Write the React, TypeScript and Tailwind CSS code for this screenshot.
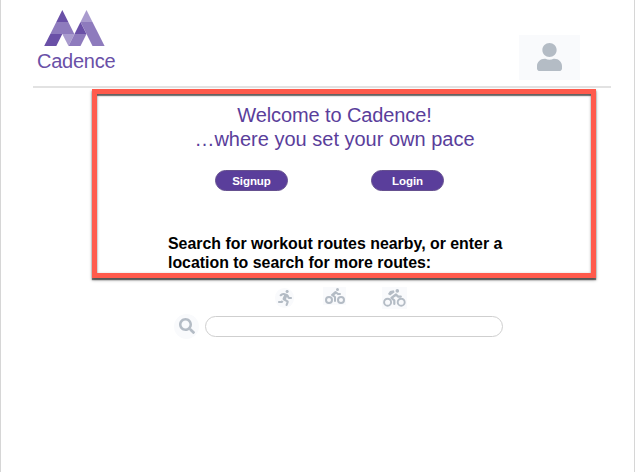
import React from "react";
import { FaUser, FaRunning, FaBiking, FaSearch } from "react-icons/fa";

function Logo() {
  return (
    <svg className="block ml-[11px]" width="61" height="36" viewBox="0 0 61 36">
      <path d="M18.3 0L24.3 12H12.3Z" fill="#6a50a7" />
      <path d="M12.3 12H24.3L30.3 24H6.3Z" fill="#8e7bbd" />
      <path d="M6.3 24H18.3L12.3 36H0.2Z" fill="#6a50a7" />
      <path d="M18.3 24H30.5L24.5 36Z" fill="#a99bce" />
      <path d="M30.5 24H42.5L36.5 36H24.5Z" fill="#8e7bbd" />
      <path d="M42.5 0L48.5 12H36.5Z" fill="#a99bce" />
      <path d="M36.5 12L42.5 24H30.5Z" fill="#6a50a7" />
      <path d="M36.5 12H48.5L60.6 36H48.5Z" fill="#8e7bbd" />
    </svg>
  );
}

function MountainBiker() {
  return (
    <svg className="block" width="23" height="18" viewBox="0 0 23 18">
      <g fill="none" stroke="#b4bcc5" strokeWidth="1.9">
        <circle cx="4.6" cy="13.2" r="3.5" />
        <circle cx="18.2" cy="13.2" r="3.5" />
        <path d="M11.3 15V11.4L8.4 9L13 5.5L15.2 7.6H17.8" strokeWidth="2.2" strokeLinecap="round" strokeLinejoin="round" />
      </g>
      <circle cx="14.3" cy="1.9" r="1.8" fill="#b4bcc5" />
      <path d="M7 2.1L10.7 1.2L11.6 3.3L7.1 6.6L4.9 4.9Z" fill="#b4bcc5" />
    </svg>
  );
}

function Button({ children }: { children: string }) {
  return (
    <button className="h-[21px] w-[73px] rounded-full border border-[#65508f] bg-[#5a3e9b] text-[11.5px] font-bold leading-[20px] tracking-[-0.05px] text-white">
      {children}
    </button>
  );
}

export default function App() {
  return (
    <div className="h-[472px] w-[635px] overflow-hidden border-x border-[#d6d6d6] bg-white font-['Liberation_Sans',Arial,sans-serif]">
      <header className="ml-8 flex h-[88px] w-[578px] justify-between border-b-2 border-[#e2e2e2]">
        <div className="pt-[10px]">
          <Logo />
          <div className="ml-[4px] mt-[4px] text-[20px] leading-[22px] tracking-[-0.25px] text-[#6a50a7]">Cadence</div>
        </div>
        <div className="mr-[31px] mt-[35px] flex h-[45px] w-[61px] items-center justify-center bg-[#f9fafc] text-[#b4bcc5]">
          <FaUser className="mb-px h-[28px] w-[25px]" preserveAspectRatio="none" />
        </div>
      </header>

      <main>
        <section className="ml-[91px] mt-px h-[189px] w-[504px] border-[5px] border-[#ff5a4c] shadow-[0_2px_1px_0_rgba(0,0,0,0.5),0_2px_3px_0_rgba(0,0,0,0.4),inset_0_2px_1px_0_rgba(0,0,0,0.5),inset_0_1px_3px_0_rgba(0,0,0,0.35)]">
          <h1 className="pt-[9px] pr-[19px] text-center text-[20px] leading-6 text-[#5a3e9b]">
            <span className="block tracking-[-0.1px]">Welcome to Cadence!</span>
            <span className="block">…where you set your own pace</span>
          </h1>
          <div className="ml-[118px] mt-[19px] flex gap-[83px]">
            <Button>Signup</Button>
            <Button>Login</Button>
          </div>
          <p className="ml-[71px] mt-[43px] whitespace-nowrap text-[15.9px] font-bold leading-[19px] text-black">
            Search for workout routes nearby, or enter a<br />
            location to search for more routes:
          </p>
        </section>

        <div className="ml-[274px] mt-[9px] flex h-[23px] text-[#b4bcc5]">
          <span className="mt-[1px] flex h-[20px] w-[19px] items-center justify-center rounded-full bg-[#f9fafc]">
            <FaRunning className="h-4 w-[14px]" preserveAspectRatio="none" />
          </span>
          <span className="ml-[29px] flex h-[18px] w-[23px] items-center justify-center bg-[#f9fafc]">
            <FaBiking className="h-[16px] w-[20px]" preserveAspectRatio="none" />
          </span>
          <span className="ml-[36px] flex h-[22px] w-[25px] items-center justify-center bg-[#f9fafc]">
            <MountainBiker />
          </span>
        </div>

        <div className="ml-[173px] mt-[4px] flex items-center">
          <span className="flex h-[25px] w-[25px] items-center justify-center rounded-full bg-[#f9fafc] pb-px text-[#b4bcc5]">
            <FaSearch className="size-4" />
          </span>
          <input aria-label="Location" className="ml-[6px] h-[21px] w-[298px] rounded-full border border-[#cfcfcf] bg-white px-3 text-xs outline-none" />
        </div>
      </main>
    </div>
  );
}
